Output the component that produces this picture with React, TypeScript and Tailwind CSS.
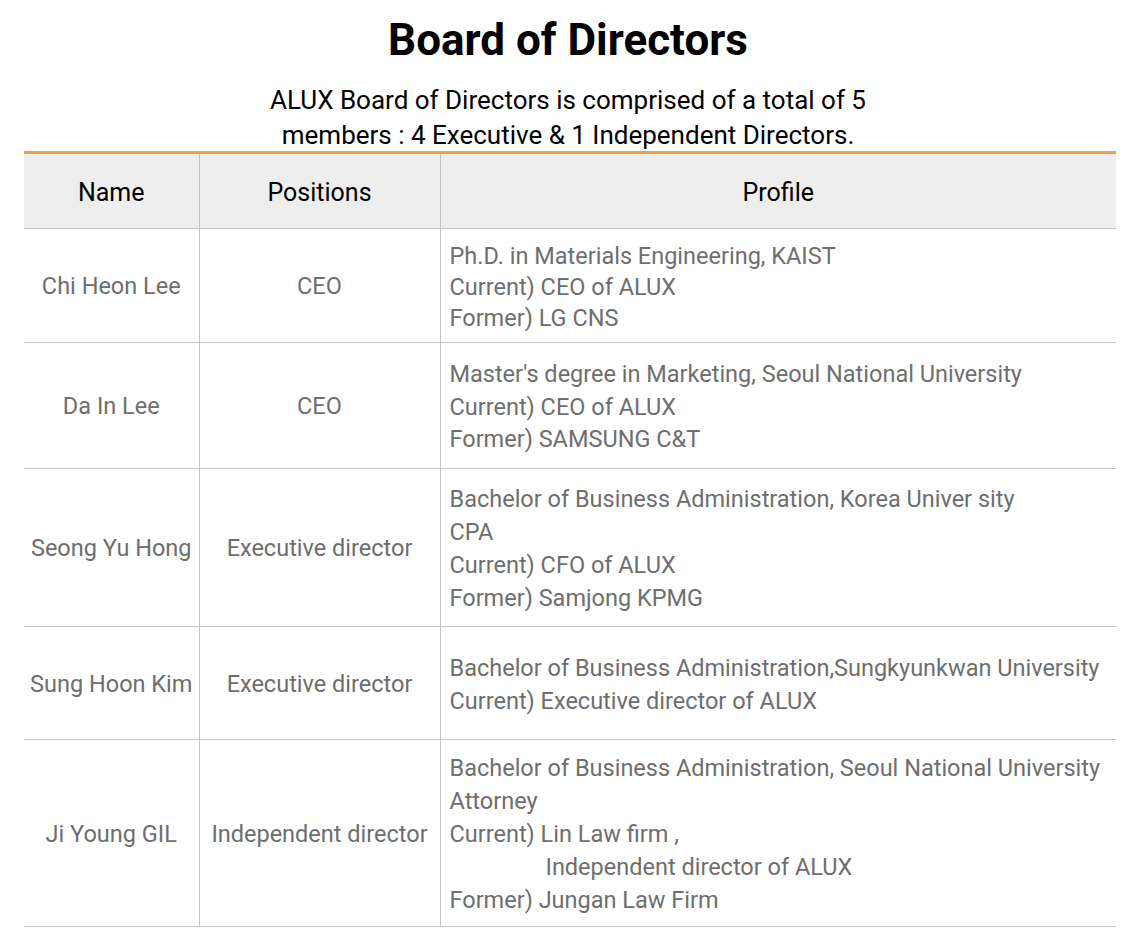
import React from "react";

type Director = {
  name: string;
  position: string;
  profile: { text: string; indent?: boolean }[];
  rowH: string;
  lead: string;
};

const directors: Director[] = [
  {
    name: "Chi Heon Lee",
    position: "CEO",
    rowH: "h-[114px]",
    lead: "leading-[31px]",
    profile: [
      { text: "Ph.D. in Materials Engineering, KAIST" },
      { text: "Current) CEO of ALUX" },
      { text: "Former) LG CNS" },
    ],
  },
  {
    name: "Da In Lee",
    position: "CEO",
    rowH: "h-[126px]",
    lead: "leading-[32.5px]",
    profile: [
      { text: "Master's degree in Marketing, Seoul National University" },
      { text: "Current) CEO of ALUX" },
      { text: "Former) SAMSUNG C&T" },
    ],
  },
  {
    name: "Seong Yu Hong",
    position: "Executive director",
    rowH: "h-[158px]",
    lead: "leading-[33px]",
    profile: [
      { text: "Bachelor of Business Administration, Korea Univer sity" },
      { text: "CPA" },
      { text: "Current) CFO of ALUX" },
      { text: "Former) Samjong KPMG" },
    ],
  },
  {
    name: "Sung Hoon Kim",
    position: "Executive director",
    rowH: "h-[113px]",
    lead: "leading-[33px]",
    profile: [
      { text: "Bachelor of Business Administration,Sungkyunkwan University" },
      { text: "Current) Executive director of ALUX" },
    ],
  },
  {
    name: "Ji Young GIL",
    position: "Independent director",
    rowH: "h-[187px]",
    lead: "leading-[33px]",
    profile: [
      { text: "Bachelor of Business Administration, Seoul National University" },
      { text: "Attorney" },
      { text: "Current) Lin Law firm ," },
      { text: "Independent director of ALUX", indent: true },
      { text: "Former) Jungan Law Firm" },
    ],
  },
];

export default function App() {
  return (
    <div className="w-full bg-white font-['Roboto','Noto_Sans_CJK_KR',sans-serif] pb-6">
      <h1 className="mt-4 text-center text-[44px] font-bold leading-[48px] text-black">
        Board of Directors
      </h1>
      <p className="mt-[19px] text-center text-[26px] leading-[35px] text-black">
        ALUX Board of Directors is comprised of a total of 5
        <br />
        members : 4 Executive &amp; 1 Independent Directors.
      </p>
      <div className="ml-6 mr-5 mt-[-2px] border-t-[3px] border-[#f0a03c]">
        <table className="w-full table-fixed border-collapse">
          <colgroup>
            <col className="w-[175px]" />
            <col className="w-[241px]" />
            <col />
          </colgroup>
          <thead>
            <tr className="h-[74px] bg-[#eeeeee] text-[25px] text-black">
              <th className="border-b border-r border-[#c4c4c4] pt-1 font-normal">Name</th>
              <th className="border-b border-r border-[#c4c4c4] pt-1 font-normal">Positions</th>
              <th className="border-b border-[#c4c4c4] pt-1 font-normal">Profile</th>
            </tr>
          </thead>
          <tbody>
            {directors.map((d, i) => (
              <tr key={i} className={`${d.rowH} text-[23.5px] text-[#6e6e6e]`}>
                <td className="border-b border-r border-[#c4c4c4] pt-1 text-center whitespace-nowrap">
                  {d.name}
                </td>
                <td className="border-b border-r border-[#c4c4c4] pt-1 text-center whitespace-nowrap">
                  {d.position}
                </td>
                <td className={`border-b border-[#c4c4c4] pl-[9px] pt-1 whitespace-nowrap ${d.lead}`}>
                  {d.profile.map((p, j) => (
                    <div key={j} className={p.indent ? "pl-[96px]" : ""}>
                      {p.text}
                    </div>
                  ))}
                </td>
              </tr>
            ))}
          </tbody>
        </table>
      </div>
    </div>
  );
}
